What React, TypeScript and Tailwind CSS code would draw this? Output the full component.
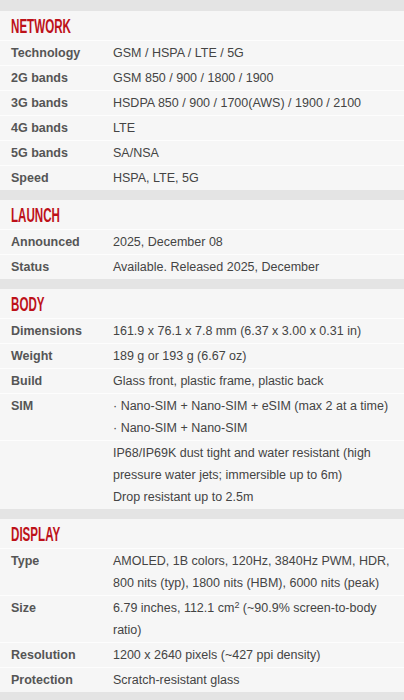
type Row = { label: string; lines: React.ReactNode[] };
type Section = { title: string; rows: Row[] };

const sections: Section[] = [
  {
    title: "NETWORK",
    rows: [
      { label: "Technology", lines: ["GSM / HSPA / LTE / 5G"] },
      { label: "2G bands", lines: ["GSM 850 / 900 / 1800 / 1900"] },
      { label: "3G bands", lines: ["HSDPA 850 / 900 / 1700(AWS) / 1900 / 2100"] },
      { label: "4G bands", lines: ["LTE"] },
      { label: "5G bands", lines: ["SA/NSA"] },
      { label: "Speed", lines: ["HSPA, LTE, 5G"] },
    ],
  },
  {
    title: "LAUNCH",
    rows: [
      { label: "Announced", lines: ["2025, December 08"] },
      { label: "Status", lines: ["Available. Released 2025, December"] },
    ],
  },
  {
    title: "BODY",
    rows: [
      { label: "Dimensions", lines: ["161.9 x 76.1 x 7.8 mm (6.37 x 3.00 x 0.31 in)"] },
      { label: "Weight", lines: ["189 g or 193 g (6.67 oz)"] },
      { label: "Build", lines: ["Glass front, plastic frame, plastic back"] },
      {
        label: "SIM",
        lines: ["· Nano-SIM + Nano-SIM + eSIM (max 2 at a time)", "· Nano-SIM + Nano-SIM"],
      },
      {
        label: "",
        lines: [
          "IP68/IP69K dust tight and water resistant (high pressure water jets; immersible up to 6m)",
          "Drop resistant up to 2.5m",
        ],
      },
    ],
  },
  {
    title: "DISPLAY",
    rows: [
      {
        label: "Type",
        lines: ["AMOLED, 1B colors, 120Hz, 3840Hz PWM, HDR, 800 nits (typ), 1800 nits (HBM), 6000 nits (peak)"],
      },
      {
        label: "Size",
        lines: [
          <>
            6.79 inches, 112.1 cm<sup className="text-[9px] leading-none">2</sup> (~90.9% screen-to-body ratio)
          </>,
        ],
      },
      { label: "Resolution", lines: ["1200 x 2640 pixels (~427 ppi density)"] },
      { label: "Protection", lines: ["Scratch-resistant glass"] },
    ],
  },
];

function SpecSection({ section }: { section: Section }) {
  return (
    <div className="bg-[#f6f6f6]">
      <div className="h-[29px] pl-[11px] overflow-hidden">
        <span className="inline-block origin-left scale-x-[0.58] text-[20px] font-bold leading-[30px] text-[#bd1119] whitespace-nowrap">
          {section.title}
        </span>
      </div>
      {section.rows.map((row, i) => (
        <div key={i} className="flex border-t border-[#fdfdfd] py-[1px]">
          <div className="w-[113px] shrink-0 pl-[11px] font-bold text-[#555] leading-[22px]">{row.label}</div>
          <div className="flex-1 pr-[6px] text-[#444] leading-[22px]">
            {row.lines.map((l, j) => (
              <div key={j}>{l}</div>
            ))}
          </div>
        </div>
      ))}
    </div>
  );
}

export default function App() {
  return (
    <div className="w-[404px] h-[700px] overflow-hidden bg-[#e4e4e4] pt-[11px] font-['Liberation_Sans',Arial,sans-serif] text-[12.5px]">
      <div className="flex flex-col gap-[10px]">
        {sections.map((s) => (
          <SpecSection key={s.title} section={s} />
        ))}
      </div>
    </div>
  );
}
